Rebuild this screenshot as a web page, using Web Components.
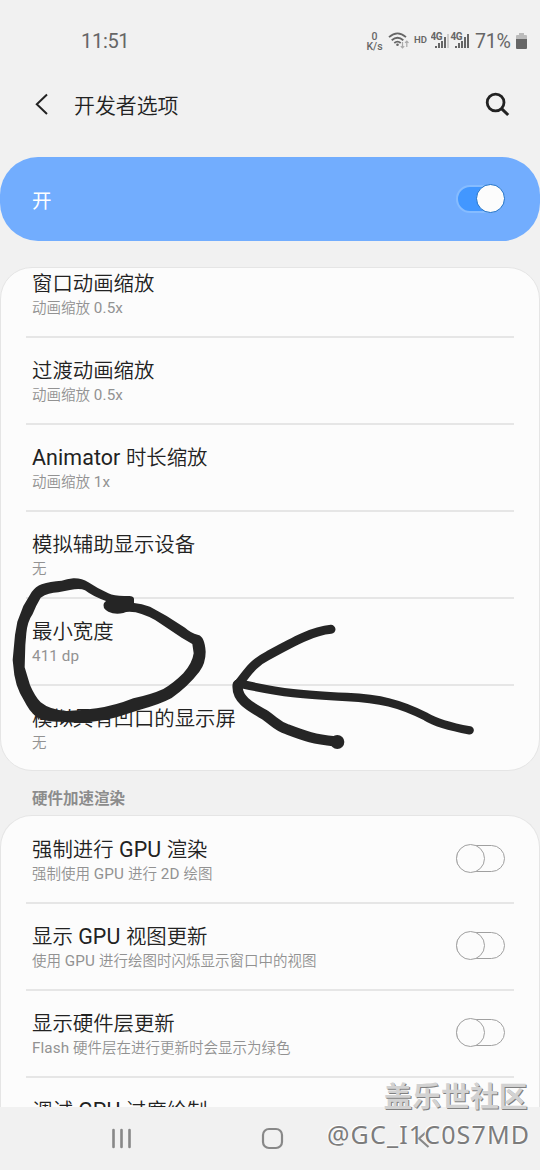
<!DOCTYPE html>
<html lang="zh-CN">
<head>
<meta charset="utf-8">
<title>开发者选项</title>
<style>
html,body{margin:0;padding:0;background:#f1f1f1}
body{font-family:Roboto,"Noto Sans CJK SC",sans-serif;color:#222;width:540px;height:1170px;overflow:hidden}
</style>
</head>
<body>
<dev-screen></dev-screen>
<script>
const define=(name,html,setup)=>customElements.define(name,class extends HTMLElement{
  connectedCallback(){
    if(this.shadowRoot)return;
    const t=document.createElement('template');
    t.innerHTML=html;
    this.attachShadow({mode:'open'}).append(t.content.cloneNode(true));
    if(setup)setup(this);
  }
});

define('status-bar',`<style>
:host{display:flex;height:64px;padding:18px 12px 0 81px;box-sizing:border-box;justify-content:space-between;color:#666}
.time{font-size:20px;line-height:47px;letter-spacing:-.3px}
.icons{display:flex;height:46px;align-items:center}
.speed{font-size:10.5px;line-height:9.5px;font-weight:500;text-align:center;width:17px;margin-right:5px;padding-top:1px}
.hd{font-size:9.5px;font-weight:600;margin:-3px 4px 0 5px;width:13px}
.pct{font-size:19.6px;margin:1px 3px 0 6px;width:38px;letter-spacing:-.2px;white-space:nowrap}
svg{display:block;flex:none}
</style>
<span class="time">11:51</span>
<div class="icons">
<div class="speed">0<br>K/s</div>
<svg width="21" height="18" viewBox="0 0 21 18" fill="none" stroke="#666" stroke-width="1.8"><path d="M1 5.200Q9.500-2.500 18 5.200M3.700 8.300Q9.500 3.200 15.300 8.300M6.300 11Q9.500 8.300 12.700 11"/><circle cx="9.500" cy="12.800" r="1.300" fill="#666" stroke="none"/><path stroke="#aaa" stroke-width="1.200" d="M14.500 10v6M12.800 14.200l1.700 1.800 1.700-1.800M18.800 15V9M17.100 10.800l1.700-1.800 1.700 1.800"/></svg>
<span class="hd">HD</span>
<svg width="38" height="18" viewBox="0 0 38 18" font-family="Roboto" font-size="10" font-weight="700" fill="#666"><text x="-.5" y="8" textLength="12">4G</text><text x="19.500" y="8" textLength="12">4G</text><path d="M4 14h2v2H4zM7 11h2v5H7zM10 9h2v7h-2zM13 5h2v11h-2zM24 14h2v2h-2zM27 11h2v5h-2zM30 9h2v7h-2zM33 5h2v11h-2zM36 2h2v14h-2z"/><path fill="#ccc" d="M16 2h2v14h-2z"/></svg>
<span class="pct">71%</span>
<svg width="12" height="17" viewBox="0 0 12 17"><path fill="#bbb" d="M3 0h5v2h2q1 0 1 1v4H0V3q0-1 1-1h2z"/><path fill="#666" d="M0 6h11v9q0 1-1 1H1q-1 0-1-1z"/></svg>
</div>`);

define('app-bar',`<style>
:host{display:flex;align-items:center;height:80px;padding:0 29px 0 34px;box-sizing:border-box}
h1{font-size:20.9px;font-weight:350;line-height:30px;margin:3px auto 0 22px}
svg{display:block}
</style>
<svg width="18" height="24" viewBox="0 0 18 24"><path d="M13 2.500 2.800 12.300 13 22" fill="none" stroke="#222" stroke-width="2"/></svg>
<h1><slot></slot></h1>
<svg width="26" height="26" viewBox="0 0 26 26" fill="none" stroke="#222"><circle cx="10.600" cy="11.500" r="8.400" stroke-width="2.800"/><path d="m16.800 17.800 6.400 6.200" stroke-width="3"/></svg>`);

define('toggle-switch',`<style>
:host{display:block;position:relative;width:50px;height:30px;flex:none}
.track{position:absolute;left:1px;right:0;top:1.500px;height:27px;box-sizing:border-box;border:1.3px solid #a0a0a0;border-radius:14px}
.knob{position:absolute;left:.5px;top:.5px;width:29px;height:29px;box-sizing:border-box;border:1.3px solid #a0a0a0;border-radius:50%;background:#fcfcfc}
:host([on]) .track{background:#4297ff;border:2px solid #86bcff;left:1px;right:1px;height:28px;top:1px}
:host([on]) .knob{left:21px;top:0;border-color:#1c70c8}
</style><div class="track"></div><div class="knob"></div>`);

define('master-switch',`<style>
:host{display:flex;align-items:center;justify-content:space-between;height:84px;margin-top:13px;padding:0 35px 0 32px;border-radius:38px;background:#72adfe;color:#fff;font-size:19.5px;box-sizing:border-box}
span{padding-top:1px}
</style><span><slot></slot></span><toggle-switch on></toggle-switch>`);

define('setting-row',`<style>
:host{display:flex;flex:none;height:87px;box-sizing:border-box;margin:0 25px;padding:20px 9px 0 6px;border-bottom:2px solid #e6e6e6;justify-content:space-between}
:host(:last-child){border-color:transparent}
.title{font-size:20.4px;line-height:26px;height:26px;white-space:nowrap;font-weight:350}
.sub{font-size:14.5px;line-height:22px;color:#929292;white-space:nowrap;padding-top:1px;font-weight:350}
.latin{font-weight:400;font-size:105%;letter-spacing:.1px;line-height:1}
toggle-switch{margin-top:6px}
</style>
<div><div class="title"></div><div class="sub"></div></div>`,el=>{
  const r=el.shadowRoot;
  const fill=(sel,text)=>{
    const box=r.querySelector(sel);
    for(const run of text.match(/[\x20-\x7e]+|[^\x20-\x7e]+/g)||[]){
      const s=document.createElement('span');
      s.textContent=run;
      if(/^[\x20-\x7e]/.test(run))s.className='latin';
      box.append(s);
    }
  };
  fill('.title',el.getAttribute('label'));
  fill('.sub',el.getAttribute('note')||'');
  if(el.hasAttribute('toggle'))r.append(document.createElement('toggle-switch'));
});

define('settings-card',`<style>
:host{display:flex;flex-direction:column;box-sizing:border-box;overflow:hidden;background:#fcfcfc;border:1px solid #e5e5e5;border-radius:32px}
</style><slot></slot>`);

define('section-title',`<style>
:host{display:block;height:44px;padding:0 32px;font-size:15.5px;font-weight:700;line-height:57px;color:#8c8c8c}
</style><slot></slot>`);

define('nav-bar',`<style>
:host{display:block;height:63px;background:#f1f1f1}
svg{display:block}
</style><svg width="540" height="63" viewBox="0 0 540 63" fill="none" stroke="#888"><path stroke-width="2.600" stroke-linecap="round" d="M113.500 23v17M121.500 23v17M129.500 23v17"/><rect x="263" y="22" width="19" height="19" rx="6" stroke-width="2.200"/><path d="m428.500 23-9.500 8.500 9.500 8.500" stroke-width="2.200"/></svg>`);

define('ink-marks',`<style>
:host{position:absolute;left:0;top:570px;width:540px;height:200px;pointer-events:none}
svg{display:block}
</style><svg width="540" height="200" viewBox="0 0 1620 600" stroke-linecap="round" stroke-linejoin="round">
<path fill="#252525" fill-rule="evenodd" d="M402 86Q400 77 385 78Q345 80 325 70Q295 57 265 37Q245 24 220 25Q200 27 185 32Q150 34 125 43Q107 50 95 66L70 108L52 155L45 195L38 270L43 315Q48 345 60 370L80 406Q98 440 130 450Q155 457 185 455Q230 460 275 455Q315 452 350 442L420 419Q480 403 515 384Q565 348 598 305Q617 280 617 245Q614 200 595 195Q570 187 555 173L500 138L450 110Q425 101 402 99ZM318 93Q280 80 255 61Q240 53 210 60L175 67Q145 68 122 83Q106 110 98 132Q82 155 79 190L76 225L74 292L90 345Q105 380 122 397Q150 420 200 423Q245 422 290 415Q345 407 400 385Q455 373 490 357Q520 340 550 310Q577 280 581 250L577 222L545 203L480 160Q450 138 407 127Q382 122 370 129Q345 135 325 125Q305 114 312 99Z"/>
<g transform="translate(600 90)" fill="none" stroke="#252525"><path stroke-width="27" d="M393 88C340 92 280 125 205 166C155 192 145 215 115 252"/><path stroke-width="31" d="M113 255C109 300 155 322 195 345C230 370 230 378 262 388C320 410 340 417 405 424"/><circle cx="412" cy="426" r="21" fill="#252525" stroke="none"/><path stroke-width="25" d="M115 250C250 280 310 285 440 291C540 296 600 310 678 350C710 370 750 380 809 391"/></g>
</svg>`);

define('water-mark',`<style>
:host{position:absolute;left:320px;top:1074px;width:220px;height:84px;pointer-events:none}
svg{display:block}
.name{fill:#d2d2d2;text-shadow:1px 1px 0 #808080,0 0 2px #fff}
.user{fill:#7c7c7c;text-shadow:0 0 2px #fff,-1px -1px 0 #fff}
</style><svg width="220" height="84" viewBox="0 0 220 84">
<text class="name" x="63.500" y="33" font-family="'Noto Sans CJK SC',sans-serif" font-size="28.800" font-weight="700">盖乐世社区</text>
<text class="user" x="7" y="70" font-family="'Noto Sans',sans-serif" font-size="25" textLength="202">@GC_I1C0S7MD</text>
</svg>`);

define('dev-screen',`<style>
:host{display:flex;flex-direction:column;position:relative;width:540px;height:1170px;overflow:hidden;background:#f1f1f1}
.first{height:504px;margin-top:26px}
.first setting-row:first-child{margin-top:-17px}
.second{height:292px;border-bottom:0;border-radius:32px 32px 0 0}
.second setting-row:first-child{margin-top:1px}
</style>
<status-bar></status-bar>
<app-bar>开发者选项</app-bar>
<master-switch>开</master-switch>
<settings-card class="first">
<setting-row label="窗口动画缩放" note="动画缩放 0.5x"></setting-row>
<setting-row label="过渡动画缩放" note="动画缩放 0.5x"></setting-row>
<setting-row label="Animator 时长缩放" note="动画缩放 1x"></setting-row>
<setting-row label="模拟辅助显示设备" note="无"></setting-row>
<setting-row label="最小宽度" note="411 dp"></setting-row>
<setting-row label="模拟具有凹口的显示屏" note="无"></setting-row>
</settings-card>
<section-title>硬件加速渲染</section-title>
<settings-card class="second">
<setting-row label="强制进行 GPU 渲染" note="强制使用 GPU 进行 2D 绘图" toggle></setting-row>
<setting-row label="显示 GPU 视图更新" note="使用 GPU 进行绘图时闪烁显示窗口中的视图" toggle></setting-row>
<setting-row label="显示硬件层更新" note="Flash 硬件层在进行更新时会显示为绿色" toggle></setting-row>
<setting-row label="调试 GPU 过度绘制"></setting-row>
</settings-card>
<nav-bar></nav-bar>
<ink-marks></ink-marks>
<water-mark></water-mark>`);
</script>
</body>
</html>
